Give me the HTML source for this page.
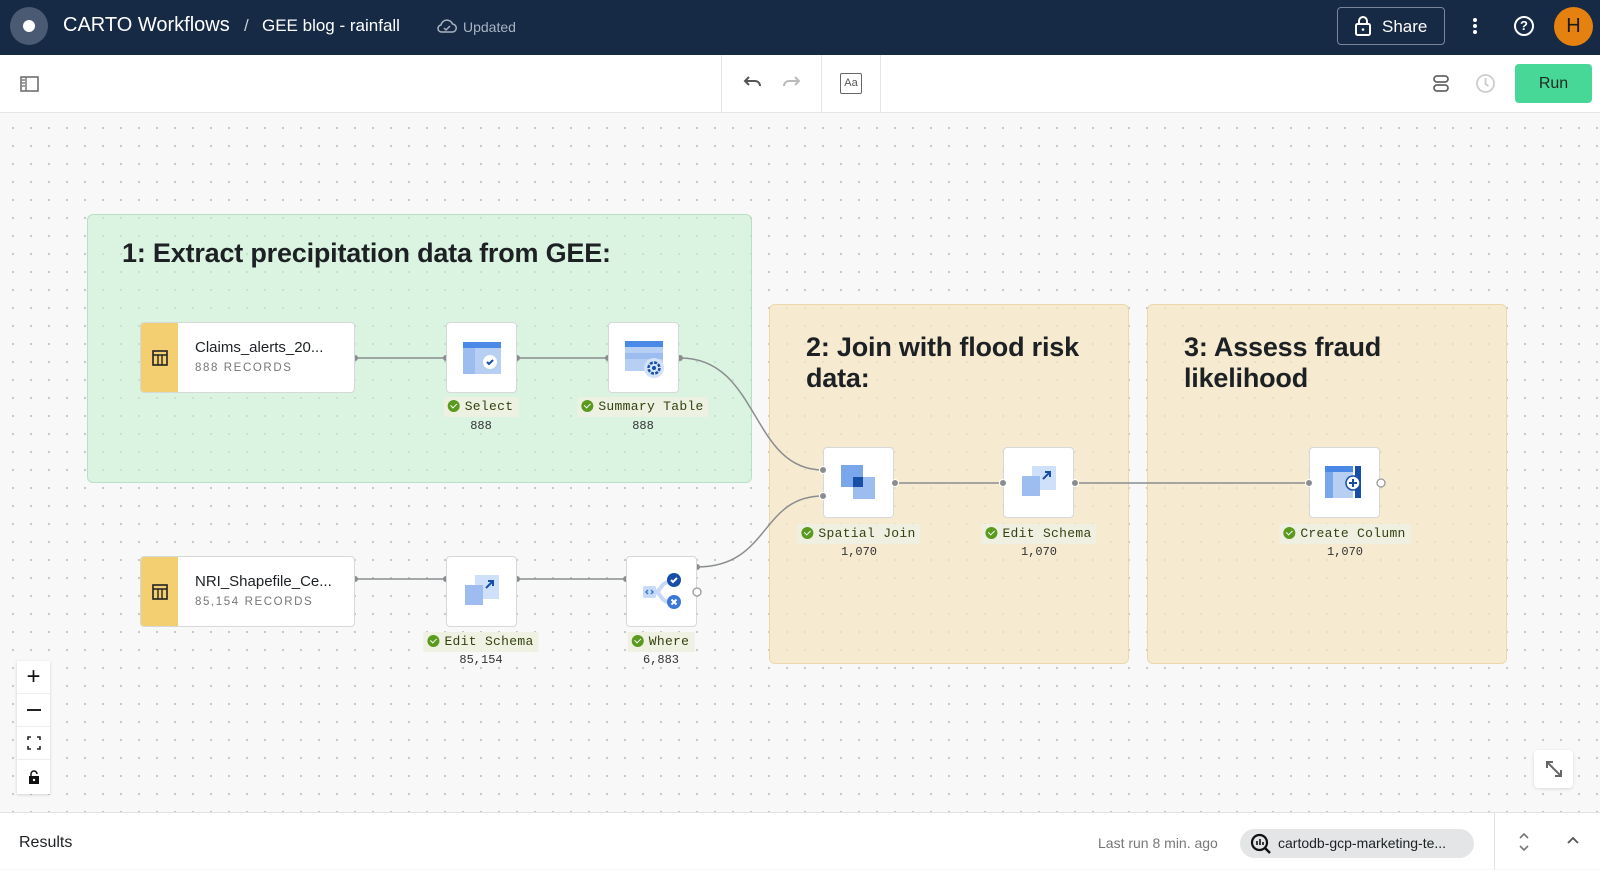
<!DOCTYPE html>
<html><head><meta charset="utf-8"><style>
*{box-sizing:border-box;margin:0;padding:0}
body{width:1600px;height:869px;overflow:hidden;font-family:"Liberation Sans",sans-serif;background:#f7f8f7;position:relative}
.abs{position:absolute}
#hdr{left:0;top:0;width:1600px;height:55px;background:#162945}
#tb{left:0;top:55px;width:1600px;height:58px;background:#fff;border-bottom:1px solid #e3e5e6}
#canvas{left:0;top:113px;width:1600px;height:699px;background-color:#f7f8f7;background-image:radial-gradient(circle,#c3c7c8 1px,transparent 1.3px);background-size:18px 18px;background-position:4px 6px}
.grp{position:absolute;border-radius:6px}
.g1{background:rgba(200,240,210,.6);border:1px solid #b8e0c4}
.g2{background:rgba(246,230,196,.75);border:1px solid #ecd8aa}
.gt{position:absolute;font-size:27px;font-weight:bold;color:#1d2124;line-height:31px;letter-spacing:-.2px}
.node{position:absolute;width:71px;height:71px;background:#fff;border:1px solid #d6d8d9;border-radius:4px}
.src{position:absolute;width:215px;height:71px;background:#fff;border:1px solid #d6d8d9;border-radius:4px;overflow:hidden}
.src .y{position:absolute;left:0;top:0;width:37px;height:100%;background:#f4cf72}
.src .n{position:absolute;left:54px;top:16px;font-size:15px;color:#1d2124}
.src .r{position:absolute;left:54px;top:39px;font-size:11.5px;color:#777;letter-spacing:1.6px}
.lbl{position:absolute;font-family:"Liberation Mono",monospace;font-size:13px;color:#33420f;background:rgba(238,240,226,.95);padding:2px 5px 2px 4px;white-space:nowrap;transform:translateX(-50%);line-height:16px;letter-spacing:.3px}
.lbl i{display:inline-block;width:12px;height:12px;border-radius:50%;background:#5a9a1e;vertical-align:-2px;margin-right:5px;position:relative}
.lbl i:after{content:"";position:absolute;left:3px;top:3px;width:5px;height:3px;border-left:1.5px solid #fff;border-bottom:1.5px solid #fff;transform:rotate(-45deg)}
.cnt{position:absolute;font-family:"Liberation Mono",monospace;font-size:12px;color:#333;transform:translateX(-50%)}
.zc{position:absolute;left:17px;width:33px;height:33px;background:#fff;border-bottom:1px solid #eee;display:flex;align-items:center;justify-content:center}
</style></head><body>
<div id="hdr" class="abs">
 <div class="abs" style="left:10px;top:7px;width:38px;height:38px;border-radius:50%;background:#4a5a72"></div>
 <div class="abs" style="left:23px;top:20px;width:12px;height:12px;border-radius:50%;background:#fff"></div>
 <div class="abs" style="left:63px;top:14px;font-size:20px;color:#fff">CARTO Workflows</div>
 <div class="abs" style="left:244px;top:16px;font-size:17px;color:#c9cfd8">/</div>
 <div class="abs" style="left:262px;top:16px;font-size:17px;color:#fff">GEE blog - rainfall</div>
 <svg class="abs" style="left:436px;top:17px" width="22" height="18" viewBox="0 0 22 18"><path d="M6 15h10a4 4 0 0 0 .5-8A6 6 0 0 0 5 8a3.5 3.5 0 0 0 1 7z" fill="none" stroke="#aab3c0" stroke-width="1.5"/><path d="M8 11l2 2 4-4" fill="none" stroke="#aab3c0" stroke-width="1.5"/></svg>
 <div class="abs" style="left:463px;top:19px;font-size:14px;color:#aab3c0">Updated</div>
 <div class="abs" style="left:1337px;top:7px;width:108px;height:38px;border:1px solid #7a8699;border-radius:4px"></div>
 <svg class="abs" style="left:1354px;top:15px" width="18" height="22" viewBox="0 0 18 22"><rect x="2" y="9" width="14" height="11" rx="1.5" fill="none" stroke="#fff" stroke-width="2"/><path d="M5 9V6a4 4 0 0 1 8 0v3" fill="none" stroke="#fff" stroke-width="2"/><circle cx="9" cy="14.5" r="1.3" fill="#fff"/></svg>
 <div class="abs" style="left:1382px;top:17px;font-size:17px;color:#fff">Share</div>
 <div class="abs" style="left:1473px;top:18px;width:4px;height:4px;border-radius:50%;background:#fff;box-shadow:0 6px 0 #fff,0 12px 0 #fff"></div>
 <div class="abs" style="left:1514px;top:16px;width:20px;height:20px;border:2px solid #fff;border-radius:50%;color:#fff;font-size:13px;font-weight:bold;text-align:center;line-height:16px">?</div>
 <div class="abs" style="left:1554px;top:7px;width:39px;height:39px;border-radius:50%;background:#e5820f;color:#1a1a1a;font-size:20px;text-align:center;line-height:39px">H</div>
</div>
<div id="tb" class="abs">
 <svg class="abs" style="left:20px;top:21px" width="19" height="16" viewBox="0 0 19 16"><rect x="1" y="1" width="17" height="14" fill="none" stroke="#666" stroke-width="1.5"/><path d="M6 1v14M2 4h3M2 7h3M2 10h3" stroke="#666" stroke-width="1.3"/></svg>
 <div class="abs" style="left:721px;top:0;width:1px;height:58px;background:#e3e5e6"></div>
 <div class="abs" style="left:821px;top:0;width:1px;height:58px;background:#e3e5e6"></div>
 <div class="abs" style="left:880px;top:0;width:1px;height:58px;background:#e3e5e6"></div>
 <svg class="abs" style="left:741px;top:20px" width="22" height="16" viewBox="0 0 22 16"><path d="M4 6h10a5 5 0 0 1 5 5" fill="none" stroke="#555" stroke-width="2"/><path d="M8 2L4 6l4 4" fill="none" stroke="#555" stroke-width="2"/></svg>
 <svg class="abs" style="left:781px;top:20px" width="22" height="16" viewBox="0 0 22 16"><path d="M18 6H8a5 5 0 0 0-5 5" fill="none" stroke="#bbb" stroke-width="2"/><path d="M14 2l4 4-4 4" fill="none" stroke="#bbb" stroke-width="2"/></svg>
 <div class="abs" style="left:840px;top:18px;width:22px;height:21px;border:1.5px solid #666;border-radius:2px;font-size:11px;color:#555;text-align:center;line-height:18px">Aa</div>
 <svg class="abs" style="left:1432px;top:19px" width="18" height="20" viewBox="0 0 18 20"><rect x="2" y="2" width="14" height="6" rx="3" fill="none" stroke="#666" stroke-width="1.8"/><rect x="2" y="11" width="14" height="6" rx="3" fill="none" stroke="#666" stroke-width="1.8"/></svg>
 <svg class="abs" style="left:1475px;top:18px" width="21" height="21" viewBox="0 0 21 21"><circle cx="10.5" cy="10.5" r="8.5" fill="none" stroke="#ccc" stroke-width="1.8"/><path d="M10.5 5v6l3 2" fill="none" stroke="#ccc" stroke-width="1.8"/></svg>
 <div class="abs" style="left:1515px;top:9px;width:77px;height:39px;background:#47d897;border-radius:4px;font-size:16px;color:#1d2a22;text-align:center;line-height:39px">Run</div>
</div>
<div id="canvas" class="abs">
 <div class="grp g1" style="left:87px;top:101px;width:665px;height:269px"></div>
 <div class="grp g2" style="left:769px;top:191px;width:360px;height:360px"></div>
 <div class="grp g2" style="left:1147px;top:191px;width:360px;height:360px"></div>
 <div class="gt" style="left:122px;top:125px">1: Extract precipitation data from GEE:</div>
 <div class="gt" style="left:806px;top:219px">2: Join with flood risk<br>data:</div>
 <div class="gt" style="left:1184px;top:219px">3: Assess fraud<br>likelihood</div>
 <svg class="abs" style="left:0;top:0" width="1600" height="699">
  <g stroke="#8a8d8f" stroke-width="1.5" fill="none">
   <path d="M355 245H446M517 245H608"/>
   <path d="M680 245C760 245 750 357 823 357"/>
   <path d="M355 466H446M517 466H626"/>
   <path d="M697 454C770 454 760 383 823 383"/>
   <path d="M895 370H1003M1075 370H1309"/>
  </g>
  <g fill="#8a8d8f">
   <circle cx="355" cy="245" r="3"/><circle cx="446" cy="245" r="3"/><circle cx="517" cy="245" r="3"/><circle cx="608" cy="245" r="3"/><circle cx="680" cy="245" r="3"/>
   <circle cx="355" cy="466" r="3"/><circle cx="446" cy="466" r="3"/><circle cx="517" cy="466" r="3"/><circle cx="626" cy="466" r="3"/><circle cx="697" cy="454" r="3"/>
  </g>
 </svg>
 <div class="src" style="left:140px;top:209px"><div class="y"></div><svg class="abs" style="left:11px;top:27px" width="16" height="16" viewBox="0 0 16 16"><rect x="1" y="1" width="14" height="14" fill="none" stroke="#222" stroke-width="1.6"/><path d="M1 5h14M6 5v10M10 5v10" stroke="#222" stroke-width="1.4"/></svg><div class="n">Claims_alerts_20...</div><div class="r">888 RECORDS</div></div>
 <div class="src" style="left:140px;top:443px"><div class="y"></div><svg class="abs" style="left:11px;top:27px" width="16" height="16" viewBox="0 0 16 16"><rect x="1" y="1" width="14" height="14" fill="none" stroke="#222" stroke-width="1.6"/><path d="M1 5h14M6 5v10M10 5v10" stroke="#222" stroke-width="1.4"/></svg><div class="n">NRI_Shapefile_Ce...</div><div class="r">85,154 RECORDS</div></div>
 <div class="node" style="left:446px;top:209px"><svg class="abs" style="left:16px;top:19px" width="38" height="32" viewBox="0 0 38 32"><rect x="0" y="0" width="38" height="32" fill="#b7cff3"/><rect x="0" y="0" width="38" height="6" fill="#4a8ae6"/><rect x="0" y="6" width="12" height="26" fill="#9dbdf0"/><circle cx="27" cy="20" r="7" fill="#fff"/><path d="M24 20l2 2 4-4" fill="none" stroke="#174ea6" stroke-width="2"/></svg></div>
 <div class="node" style="left:608px;top:209px"><svg class="abs" style="left:16px;top:18px" width="40" height="38" viewBox="0 0 40 38"><rect x="0" y="0" width="38" height="30" fill="#b7cff3"/><rect x="0" y="0" width="38" height="6" fill="#4a8ae6"/><rect x="0" y="12" width="38" height="6" fill="#9dbdf0"/><circle cx="29" cy="27" r="10" fill="#d4e2f8"/><circle cx="29" cy="27" r="5.5" fill="none" stroke="#174ea6" stroke-width="2.5" stroke-dasharray="3 1.3"/><circle cx="29" cy="27" r="2" fill="#174ea6"/></svg></div>
 <div class="node" style="left:446px;top:443px"><svg class="abs" style="left:18px;top:18px" width="34" height="34" viewBox="0 0 34 34"><rect x="10" y="0" width="24" height="24" fill="#cfe0fa"/><rect x="0" y="10" width="18" height="20" fill="#9dbdf0"/><path d="M21 13l7-7M23 6h5v5" fill="none" stroke="#174ea6" stroke-width="2"/></svg></div>
 <div class="node" style="left:626px;top:443px"><svg class="abs" style="left:14px;top:14px" width="44" height="44" viewBox="0 0 44 44"><path d="M14 21c6 0 6-10 14-10M14 21c6 0 6 10 14 10" fill="none" stroke="#c7d9f6" stroke-width="4"/><rect x="2" y="15" width="13" height="12" rx="2" fill="#c7d9f6"/><path d="M7 19l-2 2 2 2M10 19l2 2-2 2" fill="none" stroke="#3a78de" stroke-width="1.5"/><circle cx="33" cy="9" r="7" fill="#174ea6"/><path d="M30 9l2 2 4-4" fill="none" stroke="#fff" stroke-width="2"/><circle cx="33" cy="31" r="7" fill="#3a78de"/><path d="M30.5 28.5l5 5M35.5 28.5l-5 5" stroke="#fff" stroke-width="2"/></svg></div>
 <div class="node" style="left:823px;top:334px"><svg class="abs" style="left:17px;top:17px" width="36" height="36" viewBox="0 0 36 36"><rect x="0" y="0" width="22" height="22" fill="#7aa6ec"/><rect x="12" y="12" width="22" height="22" fill="#9dbdf0"/><rect x="12" y="12" width="10" height="10" fill="#174ea6"/></svg></div>
 <div class="node" style="left:1003px;top:334px"><svg class="abs" style="left:18px;top:18px" width="34" height="34" viewBox="0 0 34 34"><rect x="10" y="0" width="24" height="24" fill="#cfe0fa"/><rect x="0" y="10" width="18" height="20" fill="#9dbdf0"/><path d="M21 13l7-7M23 6h5v5" fill="none" stroke="#174ea6" stroke-width="2"/></svg></div>
 <div class="node" style="left:1309px;top:334px"><svg class="abs" style="left:15px;top:18px" width="40" height="34" viewBox="0 0 40 34"><rect x="0" y="0" width="28" height="32" fill="#b7cff3"/><rect x="0" y="0" width="28" height="6" fill="#4a8ae6"/><rect x="0" y="6" width="8" height="26" fill="#7aa6ec"/><rect x="30" y="0" width="6" height="32" fill="#174ea6"/><circle cx="28" cy="17" r="7" fill="#fff" stroke="#174ea6" stroke-width="1.5"/><path d="M28 13v8M24 17h8" stroke="#174ea6" stroke-width="2"/></svg></div>
 <svg class="abs" style="left:0;top:0" width="1600" height="699">
  <g fill="#8a8d8f" stroke="#fff" stroke-width="1">
   <circle cx="823" cy="357" r="3.5"/><circle cx="823" cy="383" r="3.5"/><circle cx="895" cy="370" r="3.5"/><circle cx="1003" cy="370" r="3.5"/><circle cx="1075" cy="370" r="3.5"/><circle cx="1309" cy="370" r="3.5"/>
  </g>
  <circle cx="697" cy="479" r="4" fill="#fff" stroke="#999" stroke-width="1.3"/>
  <circle cx="1381" cy="370" r="4" fill="#fff" stroke="#999" stroke-width="1.3"/>
 </svg>
 <div class="lbl" style="left:481px;top:284px"><i></i>Select</div><div class="cnt" style="left:481px;top:306px">888</div>
 <div class="lbl" style="left:643px;top:284px"><i></i>Summary Table</div><div class="cnt" style="left:643px;top:306px">888</div>
 <div class="lbl" style="left:481px;top:519px"><i></i>Edit Schema</div><div class="cnt" style="left:481px;top:540px">85,154</div>
 <div class="lbl" style="left:661px;top:519px"><i></i>Where</div><div class="cnt" style="left:661px;top:540px">6,883</div>
 <div class="lbl" style="left:859px;top:411px"><i></i>Spatial Join</div><div class="cnt" style="left:859px;top:432px">1,070</div>
 <div class="lbl" style="left:1039px;top:411px"><i></i>Edit Schema</div><div class="cnt" style="left:1039px;top:432px">1,070</div>
 <div class="lbl" style="left:1345px;top:411px"><i></i>Create Column</div><div class="cnt" style="left:1345px;top:432px">1,070</div>
 <div class="abs" style="left:17px;top:548px;width:33px;height:133px;box-shadow:0 1px 3px rgba(0,0,0,.15);background:#fff"></div>
 <div class="zc" style="top:548px;font-size:24px;color:#111">+</div>
 <div class="zc" style="top:581px"><div style="width:14px;height:2px;background:#222"></div></div>
 <div class="zc" style="top:614px"><svg width="14" height="14" viewBox="0 0 14 14" fill="none" stroke="#222" stroke-width="1.6"><path d="M1 4V1h3M10 1h3v3M13 10v3h-3M4 13H1v-3"/></svg></div>
 <div class="zc" style="top:647px;border:0"><svg width="12" height="14" viewBox="0 0 12 14"><rect x="1" y="6" width="10" height="8" fill="#111"/><path d="M3 6V4a3 3 0 0 1 6 0" fill="none" stroke="#111" stroke-width="1.5"/><circle cx="6" cy="10" r="1.2" fill="#fff"/></svg></div>
 <div class="abs" style="left:1534px;top:637px;width:39px;height:38px;background:#fff;border-radius:4px;box-shadow:0 1px 3px rgba(0,0,0,.12)"></div>
 <svg class="abs" style="left:1544px;top:646px" width="20" height="20" viewBox="0 0 20 20" fill="none" stroke="#666" stroke-width="2"><path d="M3 3l14 14M3 9V3h6M17 11v6h-6"/></svg>
</div>
<div class="abs" style="left:0;top:812px;width:1600px;height:57px;background:#fff;border-top:1px solid #e0e2e3">
 <div class="abs" style="left:19px;top:21px;font-size:16px;color:#1d2124">Results</div>
 <div class="abs" style="left:1098px;top:22px;font-size:14px;color:#777">Last run 8 min. ago</div>
 <div class="abs" style="left:1240px;top:16px;width:234px;height:29px;border-radius:15px;background:#e4e5e6"></div>
 <svg class="abs" style="left:1250px;top:20px" width="22" height="22" viewBox="0 0 22 22"><circle cx="9.5" cy="9.5" r="7.5" fill="none" stroke="#111" stroke-width="2.2"/><path d="M15 15l5 5" stroke="#111" stroke-width="2.4"/><path d="M7 8v4M10 6v6M13 9v3" stroke="#111" stroke-width="1.6"/></svg>
 <div class="abs" style="left:1278px;top:22px;font-size:14px;color:#1d2124">cartodb-gcp-marketing-te...</div>
 <div class="abs" style="left:1494px;top:0;width:1px;height:57px;background:#e0e2e3"></div>
 <svg class="abs" style="left:1517px;top:18px" width="14" height="22" viewBox="0 0 14 22" fill="none" stroke="#777" stroke-width="1.6"><path d="M3 7l4-4 4 4M3 15l4 4 4-4"/></svg>
 <svg class="abs" style="left:1566px;top:22px" width="14" height="10" viewBox="0 0 14 10" fill="none" stroke="#555" stroke-width="1.8"><path d="M2 8l5-5 5 5"/></svg>
</div>
</body></html>
